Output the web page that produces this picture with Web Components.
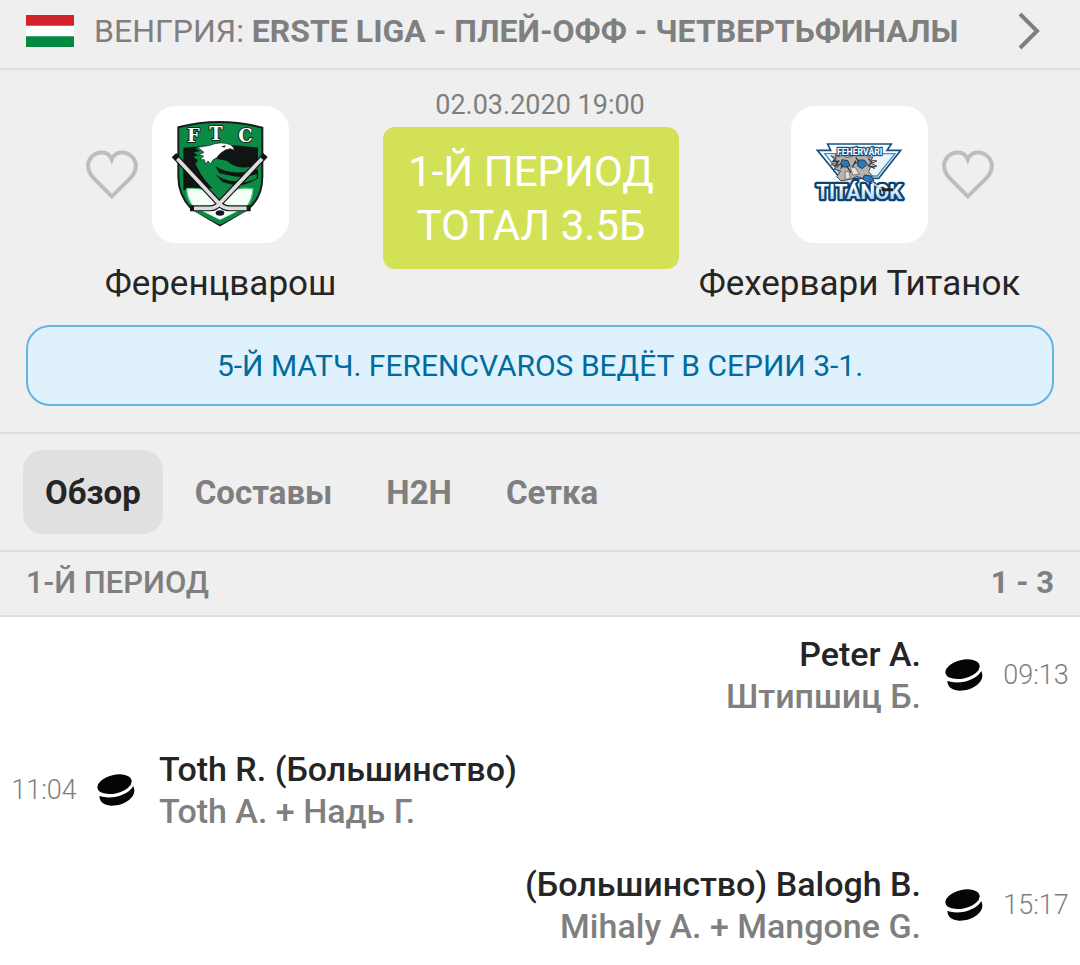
<!DOCTYPE html>
<html lang="ru">
<head>
<meta charset="utf-8">
<meta name="viewport" content="width=device-width, initial-scale=1">
<title>Ференцварош – Фехервари Титанок</title>
<style>
  html { --bar: #efefef; --line: #dedede; --muted: #7f7f7f; --ink: #252525; background: #fff; }
  body { margin: 0; font-family: Roboto, "Open Sans", sans-serif; color: var(--ink); }
</style>
</head>
<body>
<match-page></match-page>

<script>
const define = (name, html) => {
  const template = document.createElement('template');
  template.innerHTML = `<style>:host{display:block}*{box-sizing:border-box}button{font:inherit;color:inherit;border:0;background:none;padding:0;margin:0}svg{display:block}</style>` + html;
  customElements.define(name, class extends HTMLElement {
    constructor() {
      super();
      this.attachShadow({ mode: 'open' }).append(template.content.cloneNode(true));
    }
  });
};

define('league-header', `
  <style>
    :host { background: var(--bar); border-bottom: 2px solid var(--line); }
    a { display: flex; align-items: center; min-height: 68px; padding: 0 40px 6px 26px; gap: 20px; color: var(--muted); text-decoration: none; font-size: 32px; line-height: 40px; }
    .flag { width: 48px; height: 32px; flex: none; }
    .title { flex: 1; white-space: nowrap; }
    .arrow { width: 22px; height: 38px; flex: none; }
  </style>
  <a href="#league">
    <svg class="flag" viewBox="0 0 48 33" preserveAspectRatio="none" aria-hidden="true"><path fill="#fff" d="M0 0h48v33H0z"/><path fill="#d2232c" d="M0 0h48v11H0z"/><path fill="#038841" d="M0 22h48v11H0z"/></svg>
    <span class="title"><slot name="country"></slot> <b><slot></slot></b></span>
    <svg class="arrow" viewBox="0 0 22 38" fill="none" stroke="#7f7f7f" stroke-width="4" aria-hidden="true"><path d="M2 2l17 17L2 36"/></svg>
  </a>`);

define('favourite-button', `
  <style>
    :host { width: 52px; height: 49px; }
    svg { width: 52px; height: 49px; }
  </style>
  <button type="button" aria-label="В избранное">
    <svg viewBox="50 165 155 147" fill="none" stroke="#bdbdbd" stroke-width="12" aria-hidden="true"><path d="M127 304L71 248C52 227 51 202 67 185C86 166 117 168 127 193C137 168 168 166 187 185C204 202 203 227 184 248Z"/></svg>
  </button>`);

define('ftc-crest', `
  <style>svg { width: 100%; } text { font: bold 54px "DejaVu Serif", serif; fill: #fff; stroke: #111; stroke-width: 5; paint-order: stroke; text-anchor: middle; }</style>
  <svg viewBox="246 33 411 411" role="img" aria-label="FTC">
    <path d="M325 97Q450 65 577 98V245Q577 305 537 340L450 391L363 340Q325 300 325 245Z" fill="#0b8a45" stroke="#1a1d1b" stroke-width="6"/>
    <path d="M340 158Q450 142 564 158V285H340Z" fill="#101513"/>
    <path d="M340 158L400 153L376 160L390 168L372 172L384 182L370 185L384 196L376 206L392 236Q410 266 440 290H564V250Q500 292 450 250Q505 275 560 250V237Q500 260 440 225Q500 250 564 222V208Q510 232 470 197L430 190L404 155L380 152Z" fill="#0b8a45"/>
    <path d="M436 238Q480 272 536 250Q496 274 458 262ZM436 214Q485 246 560 222Q505 250 448 235Z" fill="#101513"/>
    <path d="M383 157L420 151Q450 138 478 148Q492 154 493 166L481 161L466 165Q447 176 440 189Q426 192 423 207L414 198L407 208L403 194L390 194L401 183L386 180L402 172Z" fill="#fff" stroke="#1b1b1b" stroke-width="2"/>
    <path d="M454 154l14-3-5 7z" fill="#111"/>
    <path d="M350 281Q375 279 399 283L445 327L500 282Q525 277 549 281Q548 312 529 337L450 376L371 337Q350 312 350 281Z" fill="#f4fff7" stroke="#48c47c" stroke-width="4"/>
    <path d="M402 280H496L450 323Z" fill="#0b8a45"/>
    <path d="M371 337L450 376L529 337L536 344L450 389L362 343Z" fill="#0b8a45"/>
    <path d="M318 187L445 323Q458 340 480 340H533M580 187L451 323Q438 340 420 340H369" fill="none" stroke="#151515" stroke-width="18" stroke-linecap="square" stroke-linejoin="round"/>
    <path d="M322 191L445 323Q458 340 480 340H530M576 191L451 323Q438 340 420 340H372" fill="none" stroke="#ddd" stroke-width="11" stroke-linejoin="round"/>
    <path d="M312 188l14-8M575 180l14 8" stroke="#151515" stroke-width="10"/>
    <ellipse cx="450" cy="354" rx="13" ry="8" fill="#171326"/>
    <text y="142"><tspan x="370">F</tspan><tspan x="438" y="136">T</tspan><tspan x="526" y="142">C</tspan></text>
  </svg>`);

define('titanok-crest', `
  <style>
    svg { width: 100%; }
    text { font-family: "Liberation Sans Narrow", Roboto, sans-serif; font-weight: bold; text-anchor: middle; stroke-linejoin: round; paint-order: stroke; }
    .top { font-size: 26px; fill: #fff; stroke: #155181; stroke-width: 7; }
    .name { font-size: 62px; fill: url(#ice); stroke: #0d4272; stroke-width: 14; }
  </style>
  <svg viewBox="30 33 411 411" role="img" aria-label="Fehérvári Titánok">
    <defs><linearGradient id="ice" x1="0" y1="0" x2="0" y2="1"><stop offset=".3" stop-color="#fff"/><stop offset="1" stop-color="#8fc3ea"/></linearGradient></defs>
    <path d="M140 147H331L318 166H359L293 250H178L109 166H149Z" fill="#fff" stroke="#155181" stroke-width="5"/>
    <path d="M131 176H342L289 243H183Z" fill="#e9f4fb" stroke="#4b8cba" stroke-width="4"/>
    <path d="M150 182l16 6-4-9 14 7 8-8 10 9 18-2 10-8 18 6 12-5 10 8 14 0-6 9 18 3-16 7 16 9-19 1-6 15 12 14-26 7-22-7-20 10-28 3-12-12 12-17-20-6 14-8-23-5 18-7z" fill="#b8b1ae" stroke="#4e4c50" stroke-width="3"/>
    <path d="M165 190l-10 10 18-2-10 15 20-7-2 12 12-11 17 26M224 197l-12 24 16 15M262 190l10 12-10 10 20 8M225 187l8 15-11 3" fill="none" stroke="#35373d" stroke-width="4"/>
    <path d="M183 194l18 3 6 15-16 5-12-10zM232 195l18 0 9 13-15 13-14-8z" fill="#2d7ab8" stroke="#173f66" stroke-width="3"/>
    <path d="M192 230l12 0 4 18-15 6zM208 215l16 4 11 19-20 2z" fill="#e7dfda" stroke="#5b5554" stroke-width="2"/>
    <text class="top" x="236" y="179">FEHÉRVÁRI</text>
    <text class="name" x="235" y="311">TITÁNOK</text>
    <path d="M250 240l20 3 9 15-17 4-16-9z" fill="#2d7ab8" stroke="#173f66" stroke-width="3"/>
    <path d="M272 262l29 20" stroke="#d9d9d9" stroke-width="5"/><path d="M303 284h34" stroke="#222" stroke-width="9"/>
  </svg>`);

define('team-card', `
  <style>
    .row { display: grid; grid-template-columns: 1fr 137px 1fr; column-gap: 14px; align-items: center; }
    .tile { grid-column: 2; grid-row: 1; height: 137px; background: #fff; border-radius: 24px; overflow: hidden; }
    favourite-button { grid-column: 1; grid-row: 1; justify-self: end; }
    :host([away]) favourite-button { grid-column: 3; justify-self: start; }
    h2 { margin: 17px 0 0; font-weight: 400; font-size: 35px; line-height: 48px; text-align: center; white-space: nowrap; }
  </style>
  <div class="row"><favourite-button></favourite-button><div class="tile"><slot name="crest"></slot></div></div>
  <h2><slot></slot></h2>`);

define('match-summary', `
  <style>
    :host { background: var(--bar); border-bottom: 2px solid var(--line); padding: 17px 26px 26px; }
    .teams { display: grid; grid-template-columns: minmax(0, 1fr) 250px minmax(0, 1fr); }
    .side { padding-top: 19px; }
    .middle { position: relative; text-align: center; }
    time { display: block; color: var(--muted); font-size: 27px; line-height: 36px; }
    .pick { position: absolute; top: 40px; left: -32px; width: 296px; height: 142px; padding: 18px 0; border-radius: 12px; background: #d3e157; color: #fff; font-size: 42px; line-height: 54px; white-space: nowrap; }
    .series { margin: 17px 0 0; border: 2px solid #62b5e2; border-radius: 24px; background: #def1fc; color: #006c9e; text-align: center; font-size: 30px; line-height: 40px; padding: 19px 20px 18px; }
  </style>
  <div class="teams">
    <div class="side"><slot name="home"></slot></div>
    <div class="middle"><time datetime="2020-03-02T19:00">02.03.2020 19:00</time><div class="pick"><slot name="pick"></slot></div></div>
    <div class="side"><slot name="away"></slot></div>
  </div>
  <p class="series"><slot name="series"></slot></p>`);

define('match-tabs', `
  <style>
    :host { background: var(--bar); border-bottom: 2px solid var(--line); }
    nav { display: flex; gap: 10px; padding: 16px 23px; }
    button { height: 84px; padding: 2px 22px 0; border-radius: 20px; color: var(--muted); font-weight: 700; font-size: 33px; line-height: 44px; }
    button[aria-current] { background: #e0e0e0; color: var(--ink); }
  </style>
  <nav><button type="button" aria-current="page">Обзор</button><button type="button">Составы</button><button type="button">H2H</button><button type="button">Сетка</button></nav>`);

define('period-header', `
  <style>
    :host { display: flex; justify-content: space-between; background: var(--bar); border-bottom: 2px solid var(--line); padding: 11px 26px 12px; color: var(--muted); font-weight: 500; font-size: 31px; line-height: 40px; }
    h3 { margin: 0; font: inherit; }
    b { font-weight: 700; }
  </style>
  <h3><slot></slot></h3><b><slot name="score"></slot></b>`);

define('goal-event', `
  <style>
    :host { display: flex; align-items: center; min-height: 115px; padding: 0 11px; }
    :host([away]) { flex-direction: row-reverse; text-align: right; }
    .time { flex: none; width: 66px; color: var(--muted); font-weight: 300; font-size: 27px; line-height: 36px; white-space: nowrap; text-align: center; }
    svg { flex: none; width: 38px; height: 32px; margin: 0 24px 0 20px; }
    :host([away]) svg { margin: 0 20px 0 24px; }
    p { margin: 0; font-weight: 500; font-size: 34px; line-height: 42px; }
    .assist { color: var(--muted); }
  </style>
  <span class="time"><slot name="time"></slot></span>
  <svg viewBox="735 115 115 97" fill="#050505" role="img" aria-label="Гол"><ellipse cx="788" cy="146" rx="53" ry="28" transform="rotate(-13 788 146)"/><path d="M742 182C781 194 830 178 845 151L848 162C851 188 816 212 778 211C754 210 743 199 742 182Z"/></svg>
  <div><p><slot></slot></p><p class="assist"><slot name="assist"></slot></p></div>`);

define('match-page', `
  <league-header><span slot="country">ВЕНГРИЯ:</span>ERSTE LIGA - ПЛЕЙ-ОФФ - ЧЕТВЕРТЬФИНАЛЫ</league-header>
  <match-summary>
    <team-card slot="home"><ftc-crest slot="crest"></ftc-crest>Ференцварош</team-card>
    <span slot="pick">1-Й ПЕРИОД<br>ТОТАЛ 3.5Б</span>
    <team-card slot="away" away><titanok-crest slot="crest"></titanok-crest>Фехервари Титанок</team-card>
    <span slot="series">5-Й МАТЧ. FERENCVAROS ВЕДЁТ В СЕРИИ 3-1.</span>
  </match-summary>
  <match-tabs></match-tabs>
  <main>
    <period-header>1-Й ПЕРИОД<span slot="score">1 - 3</span></period-header>
    <goal-event away><span slot="time">09:13</span>Peter A.<span slot="assist">Штипшиц Б.</span></goal-event>
    <goal-event><span slot="time">11:04</span>Toth R. (Большинство)<span slot="assist">Toth A. + Надь Г.</span></goal-event>
    <goal-event away><span slot="time">15:17</span>(Большинство) Balogh B.<span slot="assist">Mihaly A. + Mangone G.</span></goal-event>
  </main>`);
</script>
</body>
</html>
